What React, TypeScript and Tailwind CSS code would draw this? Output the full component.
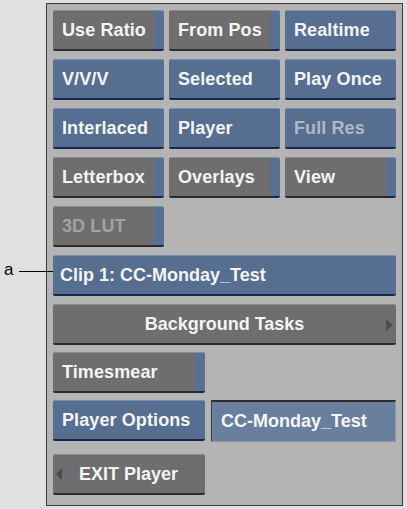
import type { ReactNode } from "react";

type BtnProps = {
  label: string;
  tone?: "gray" | "blue";
  strip?: boolean;
  dim?: boolean;
  className?: string;
};

function Btn({ label, tone = "gray", strip = false, dim = false, className = "" }: BtnProps) {
  const body =
    tone === "blue"
      ? "bg-[#566e8f] border-t border-t-[#7890ae] border-b-2 border-b-[#1c2450]"
      : "bg-[#6e6e6e] border-t border-t-[#8a8a8a] border-b-2 border-b-[#2c2c2c]";
  const text = dim
    ? tone === "blue"
      ? "text-[#b0b8c6]"
      : "text-[#a2a2a2]"
    : "text-[#f4f4f4]";
  return (
    <div className={`flex h-[41px] ${className}`}>
      <div
        className={`flex-1 flex items-center pl-[9px] rounded-l-[2px] ${strip ? "" : "rounded-r-[2px]"} ${body} ${text} text-[18px] font-bold tracking-[0.1px] whitespace-nowrap`}
      >
        {label}
      </div>
      {strip && (
        <div className="w-[10px] rounded-r-[2px] bg-[#587192] border-t border-t-[#7890ae] border-b-2 border-b-[#1c2450]" />
      )}
    </div>
  );
}

function Wide({ children, tone = "gray" }: { children: ReactNode; tone?: "gray" | "blue" }) {
  const body =
    tone === "blue"
      ? "bg-[#566e8f] border-t border-t-[#7890ae] border-b-2 border-b-[#1c2450]"
      : "bg-[#6e6e6e] border-t border-t-[#8a8a8a] border-b-2 border-b-[#2c2c2c]";
  return (
    <div
      className={`relative col-span-3 h-[41px] flex items-center rounded-[2px] ${body} text-[#f4f4f4] text-[18px] font-bold whitespace-nowrap`}
    >
      {children}
    </div>
  );
}

export default function App() {
  return (
    <div
      className="relative w-[407px] h-[509px] bg-[#e0e0e0] pl-[46px] pt-[3px]"
      style={{ fontFamily: "'Liberation Sans', Arial, sans-serif" }}
    >
      {/* callout */}
      <div className="absolute left-[4px] top-[261px] flex items-center">
        <span className="text-[17px] text-black leading-none pb-[3px]">a</span>
        <span className="ml-[6px] w-[34px] h-px bg-black" />
      </div>

      <div className="w-[357px] h-[503px] border border-[#3a3a3a] bg-[#b4b4b4] px-[6px] pt-[6px]">
        <div className="grid grid-cols-3 gap-x-[5px] gap-y-[8px]">
          <Btn label="Use Ratio" strip />
          <Btn label="From Pos" strip />
          <Btn label="Realtime" tone="blue" />

          <Btn label="V/V/V" tone="blue" />
          <Btn label="Selected" tone="blue" />
          <Btn label="Play Once" tone="blue" />

          <Btn label="Interlaced" tone="blue" />
          <Btn label="Player" tone="blue" />
          <Btn label="Full Res" tone="blue" dim />

          <Btn label="Letterbox" strip />
          <Btn label="Overlays" strip />
          <Btn label="View" strip />

          <Btn label="3D LUT" strip dim className="col-span-1" />
          <div className="col-span-2" />

          <Wide tone="blue">
            <span className="pl-[7px]">Clip 1: CC-Monday_Test</span>
          </Wide>

          <Wide>
            <span className="w-full text-center">Background Tasks</span>
            <svg className="absolute right-[3px] top-[14px]" width="7" height="12" viewBox="0 0 7 12">
              <path d="M0 0 L7 6 L0 12 Z" fill="#4e4e4e" />
            </svg>
          </Wide>
        </div>

        <div className="mt-[7px] flex flex-col gap-[7px]">
          <Btn label="Timesmear" strip className="w-[152px]" />

          <div className="flex gap-[6px]">
            <Btn label="Player Options" tone="blue" className="w-[152px]" />
            <div className="flex-1 h-[42px] flex items-center pl-[9px] bg-[#687f9d] border-t-2 border-l border-t-[#2e2e2e] border-l-[#3a3a3a] border-r border-r-[#8a98ac] border-b border-b-[#8a98ac] text-[#f6f6f6] text-[18px] font-bold whitespace-nowrap">
              CC-Monday_Test
            </div>
          </div>

          <div className="mt-[5px] w-[152px] h-[41px] flex items-center rounded-[2px] bg-[#6e6e6e] border-t border-t-[#8a8a8a] border-b-2 border-b-[#2c2c2c] text-[#f4f4f4] text-[18px] font-bold whitespace-nowrap">
            <svg className="ml-[3px]" width="6" height="12" viewBox="0 0 6 12">
              <path d="M6 0 L0 6 L6 12 Z" fill="#4a4a4a" />
            </svg>
            <span className="ml-[17px]">EXIT Player</span>
          </div>
        </div>
      </div>
    </div>
  );
}
